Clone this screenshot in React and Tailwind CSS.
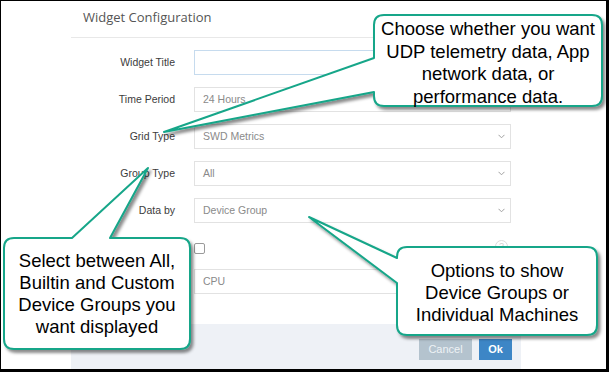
import React from "react";

// Form rows of the widget dialog
const rows = [
  { label: "Widget Title", value: "", focus: true },
  { label: "Time Period", value: "24 Hours", select: true },
  { label: "Grid Type", value: "SWD Metrics", select: true },
  { label: "Group Type", value: "All", select: true },
  { label: "Data by", value: "Device Group", select: true },
];

const Chevron = () => (
  <svg width="7" height="5" viewBox="0 0 7 5" className="shrink-0">
    <path d="M0.5 0.8 L3.5 3.8 L6.5 0.8" fill="none" stroke="#a0a0a0" strokeWidth="1" />
  </svg>
);

const Field = ({ value, focus, select }) => (
  <div
    className={`h-[25px] flex items-center justify-between pl-[8px] pr-[5px] bg-white border ${
      focus ? "border-[#c6dbee]" : "border-[#e2e2e2]"
    } text-[10.5px] text-[#8a8a8a]`}
  >
    <span>{value}</span>
    {select && <Chevron />}
  </div>
);

const Label = ({ children }) => (
  <div className="h-[25px] flex items-center justify-end text-[10.5px] text-[#3c3c3c]">{children}</div>
);

// Callout balloons drawn over the dialog
const Callouts = () => (
  <svg width="609" height="372" className="absolute left-0 top-0 pointer-events-none">
    <defs>
      <filter id="sh" x="-10%" y="-10%" width="130%" height="130%">
        <feDropShadow dx="2.5" dy="3" stdDeviation="1.8" floodColor="#000" floodOpacity="0.45" />
      </filter>
    </defs>
    <g fill="#fff" stroke="#17a689" strokeWidth="2" strokeLinejoin="round" filter="url(#sh)">
      <path d="M384 15 H592 Q602 15 602 25 V96 Q602 106 592 106 H384 Q374 106 374 96 V92 L164 132 L374 58 V25 Q374 15 384 15 Z" />
      <path d="M14 238 H72 L148 168 L110 238 H180 Q190 238 190 248 V339 Q190 349 180 349 H14 Q4 349 4 339 V248 Q4 238 14 238 Z" />
      <path d="M407 247 H587 Q597 247 597 257 V325 Q597 335 587 335 H407 Q397 335 397 325 V283 L309 217 L397 258 V257 Q397 247 407 247 Z" />
    </g>
  </svg>
);

const CalloutText = ({ className, lines }) => (
  <div
    className={`absolute text-center text-black text-[18.5px] leading-[22.5px] ${className}`}
    style={{ fontFamily: '"Liberation Sans", Arial, sans-serif' }}
  >
    {lines.map((l) => (
      <div key={l} className="whitespace-nowrap">{l}</div>
    ))}
  </div>
);

export default function App() {
  return (
    <div className="relative w-[609px] h-[372px]" style={{ fontFamily: '"Liberation Sans", Arial, sans-serif' }}>
      <div className="w-full h-full bg-white border-t border-l border-r-[3px] border-b-[3px] border-black flex">
        <div className="ml-[70px] w-[450px] h-full flex flex-col">
          {/* Header */}
          <div
            className="h-[37px] shrink-0 border-b border-[#e8e8e8] flex items-center pl-[12px] pb-[2px] text-[13px] text-[#555]"
            style={{ fontFamily: '"Open Sans", sans-serif' }}
          >
            Widget Configuration
          </div>

          {/* Form */}
          <div className="pt-[12px] grid grid-cols-[104px_317px] gap-x-[19px] gap-y-[12px]">
            {rows.map((r) => (
              <React.Fragment key={r.label}>
                <Label>{r.label}</Label>
                <Field value={r.value} focus={r.focus} select={r.select} />
              </React.Fragment>
            ))}
            <div />
            <div className="h-[22px] flex items-start justify-between pt-[8px]">
              <div className="w-[11px] h-[11px] border border-[#9a9a9a] rounded-[2px] bg-white" />
              <div className="w-[13px] h-[13px] -mt-[3px] mr-[3px] rounded-full border border-[#dcdcdc] text-[#d0d0d0] text-[9px] leading-[11px] text-center">
                ?
              </div>
            </div>
            <div />
            <Field value="CPU" />
          </div>

          {/* Footer */}
          <div className="mt-auto h-[45px] shrink-0 bg-[#eef1f6] flex justify-end items-start pt-[15px] pr-[9px] gap-[7px]">
            <button className="h-[21px] w-[53px] bg-[#b4c3ce] text-[#eef2f5] text-[11px]">Cancel</button>
            <button className="h-[21px] w-[33px] bg-[#3d86c6] text-white text-[11px] font-bold">Ok</button>
          </div>
        </div>
      </div>

      <Callouts />
      <CalloutText
        className="left-[374px] w-[228px] top-[18px]"
        lines={["Choose whether you want", "UDP telemetry data, App", "network data, or", "performance data."]}
      />
      <CalloutText
        className="left-[4px] w-[186px] top-[250px] leading-[22px]"
        lines={["Select between All,", "Builtin and Custom", "Device Groups you", "want displayed"]}
      />
      <CalloutText
        className="left-[397px] w-[200px] top-[260px] leading-[22px]"
        lines={["Options to show", "Device Groups or", "Individual Machines"]}
      />
    </div>
  );
}
